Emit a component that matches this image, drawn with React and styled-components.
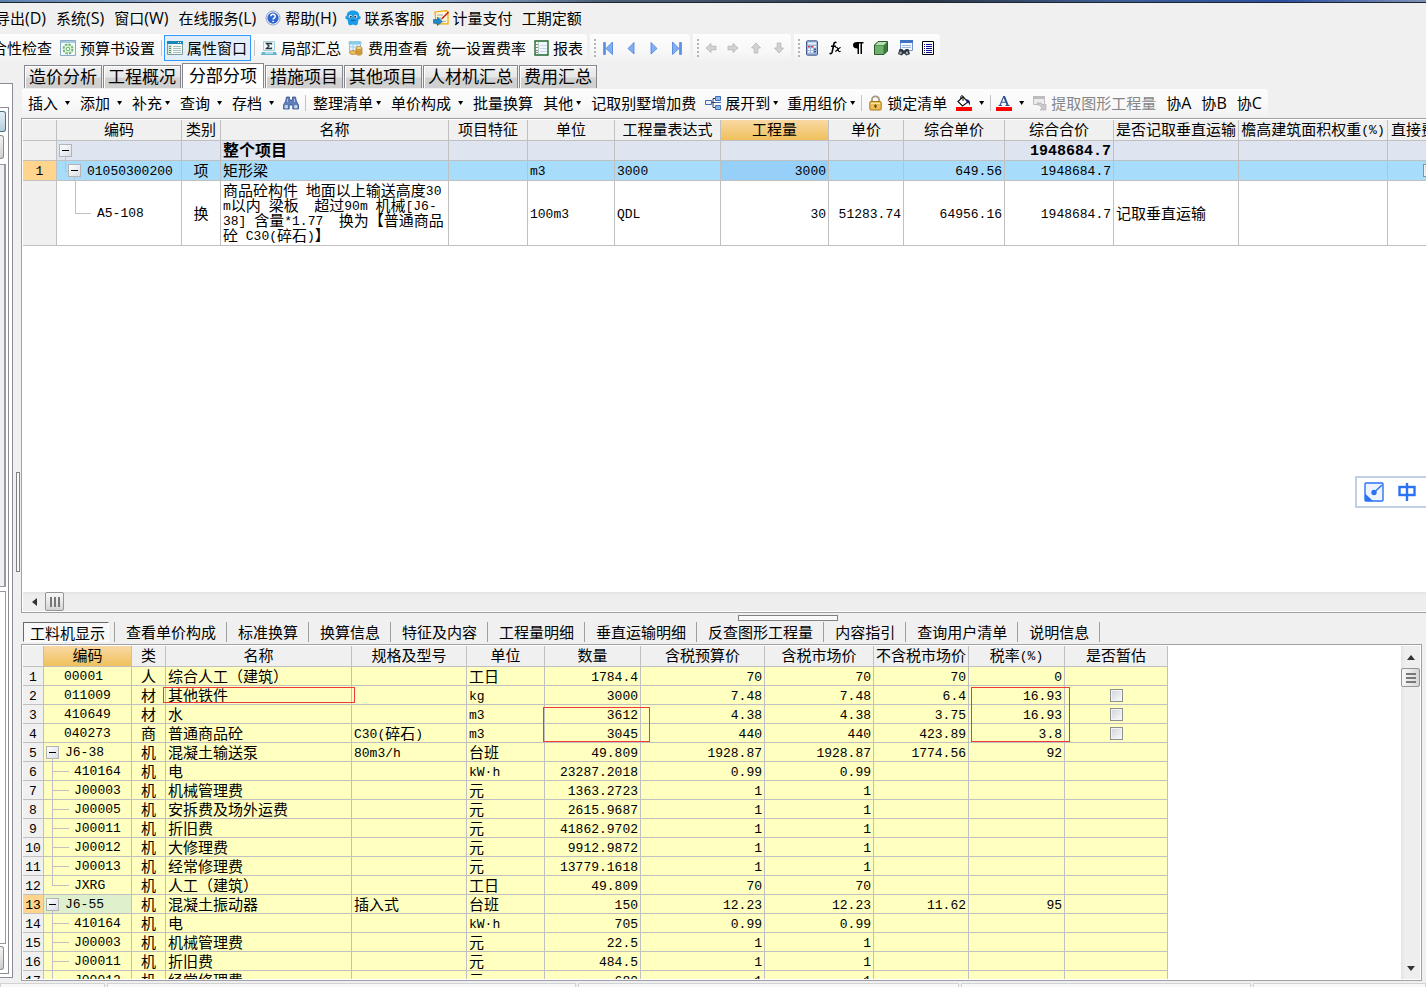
import React from "react";
import styled, { createGlobalStyle, css } from "styled-components";

const UI_FONT = `"Noto Sans CJK SC", sans-serif`;
const LINE = "#c0c0c0";
const FRAME = "#a0a0a6";

const Global = createGlobalStyle`
  *, *::before, *::after { box-sizing: border-box; }
  body { margin: 0; background: #f0f0f0; color: #000; font: 15px/20px ${UI_FONT}; overflow: hidden; }
  button { font: inherit; color: inherit; background: none; border: 0; margin: 0; padding: 0; white-space: nowrap; }
  svg { display: block; flex: none; }
`;

const Screen = styled.div`
  display: flex;
  flex-direction: column;
  height: 100vh;
  overflow: hidden;
`;

const TitleEdge = styled.div`
  flex: none;
  height: 3px;
  border-bottom: 1px solid #1c2733;
  background: linear-gradient(90deg, #5a7fae, #8fa9c9 12%, #9fc0e6 28%, #4d6079 42%, #2b3645 65%, #3d5e93 78%, #2c4fa0 90%, #7e92b5);
`;

/* ---------- text ---------- */

const Latin = styled.span`
  font-family: "Open Sans", sans-serif;
  font-size: 16px;
`;

const Mono = styled.span`
  font-family: "Liberation Mono", monospace;
  font-size: ${(p) => (p.$strong ? 15 : 13)}px;
  line-height: 0;
  vertical-align: 1px;
  white-space: pre;
`;

const split = (text) => text.split(/([\x20-\x7e·]+)/).filter(Boolean);
const isAscii = (run) => /^[\x20-\x7e·]+$/.test(run);

const UiText = ({ children }) =>
  split(children).map((run, i) => (isAscii(run) ? <Latin key={i}>{run}</Latin> : run));

const GridText = ({ children, strong }) =>
  split(children).map((run, i) =>
    isAscii(run) ? <Mono key={i} $strong={strong}>{run}</Mono> : run
  );

/* ---------- menu and toolbars ---------- */

const MenuBar = styled.nav`
  display: flex;
  flex: none;
  align-items: center;
  height: 31px;
  padding-bottom: 2px;
  margin-left: -10px;
`;

const ToolRow = styled.div`
  display: flex;
  flex: none;
  gap: 3px;
  height: ${(p) => (p.$inner ? 29 : 28)}px;
  padding-left: ${(p) => (p.$inner ? 1 : 0)}px;
`;

const ToolBar = styled.div`
  display: flex;
  align-items: center;
  flex: none;
  height: 28px;
  padding: ${(p) => (p.$flush ? "0" : "0 1px")};
  margin-left: ${(p) => (p.$flush ? "-12px" : "0")};
  border-radius: 0 3px 3px 0;
  background: linear-gradient(#fdfdfd, #f8f8f8 60%, #f0f0f0);
`;

const ToolButton = styled.button`
  display: flex;
  align-items: center;
  gap: 4px;
  height: 26px;
  padding: 0 ${(p) => p.$pad || 5}px;
  color: ${(p) => (p.$muted ? "#868686" : "inherit")};
  ${(p) =>
    p.$pressed &&
    css`
      padding: 0 3px 0 2px;
      border: 1px solid #3399ff;
      background: #e3eefb;
    `}
`;

const Caret = styled.i`
  width: 5px;
  height: 4px;
  margin-left: ${(p) => (p.$wide ? 3 : -1)}px;
  background: #000;
  clip-path: polygon(0 0, 100% 0, 50% 100%);
`;

const Divider = styled.i`
  width: 1px;
  height: 16px;
  margin: 0 ${(p) => p.$space || 1}px;
  background: #c4c4c4;
`;

const Grip = styled.i`
  width: 2px;
  height: 19px;
  margin: 0 1px 0 3px;
  background: repeating-linear-gradient(#b4b4b4 0 2px, transparent 2px 4px);
`;

/* ---------- icons ---------- */

const Svg = ({ w = 16, children }) => (
  <svg width={w} height="16" viewBox={`0 0 ${w} 16`} aria-hidden="true">{children}</svg>
);

const HelpIcon = () => (
  <Svg>
    <circle cx="8" cy="8" r="7" fill="#fff" stroke="#8fa0c4" />
    <circle cx="8" cy="8" r="5.700" fill="#2f66d0" />
    <path d="M5.8 6.3a2.2 2.1 0 1 1 3.5 1.7c-.8.5-1.2.8-1.2 1.6M8.1 10.7v1.4" stroke="#fff" strokeWidth="1.6" fill="none" />
  </Svg>
);
const MascotIcon = () => (
  <Svg>
    <path d="M8 .5c4.200 0 6.300 2.300 6.300 5.500l1.500.8-.5 2.200-1.800.5-.6 3.200c-.3 2.200-1.200 2.900-2.800 2.500L8 14.500l-2.100.7c-1.600.4-2.500-.3-2.800-2.500l-.6-3.200-1.800-.5L.2 6.800 1.700 6C1.700 2.800 3.800.5 8 .5z" fill="#1b9ce8" />
    <circle cx="5.500" cy="6.500" r="1.800" fill="#d8e6ee" />
    <circle cx="10.500" cy="6.500" r="1.800" fill="#d8e6ee" />
    <circle cx="5.800" cy="6.700" r="1" fill="#234" />
    <circle cx="10.200" cy="6.700" r="1" fill="#234" />
    <path d="M6 10.500h4" stroke="#0a5f9e" />
  </Svg>
);
const PayIcon = () => (
  <Svg>
    <path d="M2 2l11-1.300 2 1.200v12H3z" fill="#fff6dc" stroke="#f0a800" strokeWidth="1.200" />
    <path d="M4 5h6M4 8h4M9 12l4-1" stroke="#9aa" />
    <path d="M15 1.500L9 7.500 7.500 10 10 8.800l6-6z" fill="#c8281e" />
    <path d="M.5 9.500h4V7.300L9.300 11.500 4.500 15.500v-2.200h-4z" fill="#1e88d0" stroke="#0b5a97" strokeWidth=".6" />
  </Svg>
);
const SettingsIcon = () => (
  <Svg>
    <path d="M.5.5h15v15H.5z" fill="#f4f9fb" stroke="#86aac4" />
    <path d="M1 1h14v2H1z" fill="#a9c9e2" />
    <circle cx="8" cy="9" r="4.500" fill="#e7f6e6" stroke="#74b874" strokeWidth="2" strokeDasharray="2.500 1" />
    <circle cx="8" cy="9" r="1.800" fill="#fff" stroke="#5fae62" />
  </Svg>
);
const PropertyIcon = () => (
  <Svg>
    <path d="M.5 1.500h15v13H.5z" fill="#f5fafa" stroke="#7d9a98" />
    <path d="M0 1h16v3H0z" fill="#1587b8" />
    <path d="M11 2h1v1h-1zM13 2h1v1h-1z" fill="#fff" />
    <path d="M1 4.500h4V14H1z" fill="#d4e8dc" />
    <path d="M2 6.500h2M2 8.500h2M2 10.500h2M2 12.500h2" stroke="#65956f" />
    <path d="M6 6.500h8M6 8.500h8M6 10.500h8M6 12.500h8" stroke="#a9bcbc" />
  </Svg>
);
const SumIcon = () => (
  <Svg>
    <path d="M2.500 1.500h11v9h-11z" fill="#eef8fb" stroke="#a7cfdc" />
    <path d="M10.500 4.500V3.500h-5L8 6 5.500 8.500h5v-1" stroke="#26353d" strokeWidth="1.300" fill="none" />
    <path d="M1 12h14l1 3H0z" fill="#63b6d0" />
    <path d="M4 13h8" stroke="#fff" />
  </Svg>
);
const FeeIcon = () => (
  <Svg>
    <path d="M1.500 1.500h11v10h-11z" fill="#e3f4fd" stroke="#86c3e0" />
    <path d="M1 2h12v2H1zM5 2v9M9 2v9M1 7h12" stroke="#9bd0ea" fill="#74bfe6" />
    <ellipse cx="5" cy="12.500" rx="3.500" ry="2" fill="#edbf5c" stroke="#b27c22" strokeWidth=".7" />
    <path d="M8 8v5.500c0 2.200 6 2.200 6 0V8z" fill="#e2aa45" stroke="#b27c22" strokeWidth=".7" />
    <ellipse cx="11" cy="8" rx="3" ry="1.500" fill="#f8d98c" stroke="#b27c22" strokeWidth=".7" />
    <path d="M8 10.500c1 1.300 5 1.300 6 0M8 12.500c1 1.300 5 1.300 6 0" stroke="#b27c22" strokeWidth=".7" fill="none" />
  </Svg>
);
const ReportIcon = () => (
  <Svg w={15}>
    <path d="M1 1h13v14H1z" fill="#f1f6ff" stroke="#1d6a2c" strokeWidth="1.400" />
    <path d="M4.500 2v12" stroke="#b9c9bd" />
    <path d="M2 4.500h2M2 7.500h2M2 10.500h2M2 12.500h2" stroke="#888" />
    <path d="M6 5.500h7M6 8.500h7M6 11.500h7" stroke="#c9d7ea" />
  </Svg>
);
const PlayIcon = ({ flip, bar }) => (
  <Svg>
    <g transform={flip ? "translate(16 0) scale(-1 1)" : undefined}>
      <path d={bar ? "M3.500 2L10 8.500 3.500 14.500z" : "M5 2.500L11 8.500 5 14z"} fill="#7fb0f6" stroke="#4a7dd6" strokeWidth=".8" />
      {bar && <path d="M10.500 2.500h2v12h-2z" fill="#5d91e6" stroke="#4a7dd6" strokeWidth=".6" />}
    </g>
  </Svg>
);
const ArrowIcon = ({ turn }) => (
  <Svg>
    <path d="M3 8l5-4.500V6.200h5v3.600H8v2.700z" fill="#d3d3d3" stroke="#b3b3b3" strokeWidth=".8" transform={`rotate(${turn} 8 8)`} />
  </Svg>
);
const CalcIcon = () => (
  <Svg>
    <rect x="2.500" y=".8" width="11" height="14.400" rx="1" fill="#9db7de" stroke="#41598c" />
    <path d="M4 2.500h8v2H4z" fill="#e9f2ff" />
    <path d="M4 6.800h8M4 9.300h8M4 11.800h8" stroke="#fff" strokeWidth="1.500" strokeDasharray="2 1" />
    <path d="M4 6.800h2M7 6.800h2" stroke="#d34" strokeWidth="1.500" />
    <path d="M10 11.800h2M10 9.300h2" stroke="#2c4d90" strokeWidth="1.500" />
  </Svg>
);
const FxIcon = () => (
  <Svg>
    <path d="M9.500 2.600C7.800 1.500 7 3 6.600 5L5.300 11.500C5 13.500 4 14 2.600 13.300M4 6.300h5" stroke="#000" strokeWidth="1.600" fill="none" />
    <path d="M8.500 7.500c1.500-.8 2 .3 2.500 2s1 2.700 2.600 1.800M13.700 7.500c-1.500-.3-4 4-5.500 4" stroke="#000" strokeWidth="1.200" fill="none" />
  </Svg>
);
const PilcrowIcon = () => (
  <Svg>
    <path d="M7 2h6.500v1.500H12V14h-1.500V3.500H9V14H7.500V8.500C4.500 8.500 3 7.200 3 5.200S4.500 2 7 2z" fill="#000" />
  </Svg>
);
const CubeIcon = () => (
  <Svg>
    <path d="M1.500 5L5 1.500h9.500V11L11 14.500H1.500z" fill="#3b7a3d" stroke="#285c2b" />
    <path d="M2 5.500h8.500V14H2z" fill="#6fb06c" />
    <path d="M2.500 5L5.200 2h8.600L11 5z" fill="#b6dfb2" />
  </Svg>
);
const FindSheetIcon = () => (
  <Svg>
    <path d="M3.500.5h12v10h-12z" fill="#f4f8ff" stroke="#7295cc" />
    <path d="M3 0h13v3H3z" fill="#3f74c4" />
    <path d="M5 5.500h9M5 7.500h9" stroke="#9db6dc" />
    <path d="M2.500 9h3l.5 1.500h2L8.500 9h3l1.500 5-3.500 1.500L7 13.500 4.500 15.500 1 14z" fill="#30363d" />
    <circle cx="3.600" cy="12.900" r="1.300" fill="#9aa5b0" />
    <circle cx="10" cy="12.900" r="1.300" fill="#9aa5b0" />
  </Svg>
);
const ListIcon = () => (
  <Svg>
    <path d="M2.500 1.500h11v13h-11z" fill="#fff" stroke="#000" />
    <path d="M4 4.500h1M4 6.500h1M4 8.500h1M4 10.500h1M4 12.500h1M6 4.500h6M6 6.500h6M6 8.500h6M6 10.500h6M6 12.500h6" stroke="#10108c" />
  </Svg>
);
const BinocularsIcon = () => (
  <Svg>
    <path d="M3.500 2h3v3h3V2h3l.8 4L15.500 10v4H9.800v-4H6.200v4H.5v-4L2.700 6z" fill="#5f80bb" stroke="#34528c" strokeWidth=".8" />
    <path d="M2 10.500h2.500v2.500H2zM11.500 10.500H14v2.500h-2.500zM4.500 4v3M11.500 4v3" fill="#c3d3f0" stroke="#c3d3f0" strokeWidth=".8" />
  </Svg>
);
const ExpandIcon = () => (
  <Svg>
    <path d="M6 7.500h4M8 3.500v9M8 3.500h3M8 12.500h3" stroke="#2b3d66" fill="none" />
    <path d="M.5 5.500h6v4h-6z" fill="#e6f0ff" stroke="#3f6bb5" />
    <path d="M10.500 1.500h5v4h-5zM10.500 10.500h5v4h-5z" fill="#8db4ee" stroke="#3f6bb5" />
    <path d="M10 7.500h6" stroke="#3f6bb5" />
  </Svg>
);
const LockIcon = () => (
  <Svg w={15}>
    <path d="M4 8V4.500a3.500 3.200 0 0 1 7 0V8" fill="none" stroke="#a79a80" strokeWidth="1.800" />
    <rect x="1.800" y="6.500" width="11.400" height="8.500" rx="1" fill="#edbe55" stroke="#a87820" />
    <path d="M3 8.500h9" stroke="#fae3a4" />
    <path d="M7.500 9.500v3.500M6.200 10.800h2.600" stroke="#63430c" strokeWidth="1.300" />
  </Svg>
);
const FillIcon = () => (
  <Svg>
    <path d="M2 6.500L7 1.800 12 7 6.500 11z" fill="#fff" stroke="#111" strokeWidth="1.200" />
    <path d="M7 6V1.500C7 .3 4.800.3 4.800 1.800V4" stroke="#111" fill="none" />
    <path d="M10 4.500c3 0 4.500 1.500 4 6-1-2-1.500-3-3-3z" fill="#10107c" />
    <path d="M0 12h16v4H0z" fill="#f00" />
  </Svg>
);
const FontColorIcon = () => (
  <Svg>
    <path d="M7.300 1h1.700l3.600 9h1v1H9.500v-1h1L9.700 7.800H5.600L4.800 10h1.200v1H2.500v-1h1zM7.600 3L6 6.800h3.300z" fill="#2d4f93" />
    <path d="M0 12h16v4H0z" fill="#f00" />
  </Svg>
);
const ExtractIcon = () => (
  <Svg w={15}>
    <path d="M1.500 1.500h11v8h-11z" fill="#ececec" stroke="#bdbdbd" />
    <path d="M1 1h12v3H1z" fill="#bdbdbd" />
    <path d="M5 8h4l3 3 2-2v6H8l2-2-3-3H5z" fill="#c9c9c9" stroke="#adadad" strokeWidth=".6" />
  </Svg>
);
const PenIcon = () => (
  <svg width="20" height="20" viewBox="0 0 20 20" aria-hidden="true">
    <rect x="1" y="1" width="18" height="18" rx="1" fill="#eef4ff" stroke="#2b73f6" strokeWidth="1.400" />
    <path d="M1 11.500L9 19H1z" fill="#2b73f6" />
    <circle cx="10" cy="10.500" r="2.700" fill="#2b73f6" />
    <path d="M10 10.500L18 3" stroke="#2b73f6" strokeWidth="1.500" />
  </svg>
);
const ZhongIcon = () => (
  <svg width="18" height="20" viewBox="0 0 18 20" aria-hidden="true">
    <rect x="1.500" y="5" width="15" height="8" fill="none" stroke="#2b73f6" strokeWidth="2.400" />
    <path d="M9 1v18" stroke="#2b73f6" strokeWidth="2.400" />
  </svg>
);

/* ---------- body frame ---------- */

const Body = styled.div`
  display: flex;
  flex: 1;
  min-height: 0;
`;

const SideDock = styled.aside`
  flex: none;
  display: flex;
  width: 13px;
  margin: 21px 0 3px;
  padding: 23px 3px 3px 0;
  border: solid #8c8c96;
  border-width: 1px 1px 1px 0;
  background: #fff;
`;

const SideInner = styled.div`
  flex: 1;
  display: flex;
  flex-direction: column;
  align-items: flex-start;
  padding-top: 3px;
  border: solid #8c8c96;
  border-width: 1px 1px 1px 0;
`;

const SideButton = styled.button`
  flex: none;
  width: ${(p) => (p.$blue ? 6 : 4)}px;
  height: ${(p) => (p.$blue ? 21 : 24)}px;
  margin-bottom: 3px;
  border: solid ${(p) => (p.$blue ? "#4d7184" : "#8a8a8a")};
  border-width: 1px 1px 1px 0;
  border-radius: 0 3px 3px 0;
  background: ${(p) => (p.$blue ? "linear-gradient(#e4f1f8, #b4cedb)" : "linear-gradient(#f4f4f4, #cfcfcf)")};
`;

const SideList = styled.div`
  flex: ${(p) => p.$grow};
  width: 6px;
  margin: 2px 0;
  border: solid #9a9a9e;
  border-width: 1px ${(p) => (p.$thick ? 2 : 1)}px 1px 0;
  background: ${(p) => (p.$thick ? "#eef0f6" : "#fff")};
`;

const VSplit = styled.div`
  flex: none;
  display: flex;
  align-items: center;
  justify-content: flex-end;
  width: 8px;
  padding: 0 1px 0 0;
`;

const Handle = styled.i`
  flex: none;
  width: ${(p) => (p.$across ? 100 : 4)}px;
  height: ${(p) => (p.$across ? 6 : 100)}px;
  border: 1px solid #808080;
  background: #fafafa;
`;

const Main = styled.main`
  flex: 1;
  min-width: 0;
  display: flex;
  flex-direction: column;
`;

const TabStrip = styled.div`
  display: flex;
  flex: none;
  align-items: flex-end;
  gap: 1px;
  height: 27px;
  padding: 0 0 1px 3px;
`;

const Tab = styled.button`
  height: ${(p) => (p.$active ? 25 : 23)}px;
  padding: 0 ${(p) => (p.$active ? 6 : 4)}px 2px;
  border: solid #86868e;
  border-width: 1px 1px 0;
  background: ${(p) => (p.$active ? "#fff" : "linear-gradient(#f2f2f2, #e6e6e6 50%, #d2d2d2 55%, #cfcfcf)")};
  box-shadow: ${(p) => (p.$active ? "none" : "inset 1px 1px #fff")};
  font-size: 17px;
  line-height: 20px;
`;

/* ---------- grids ---------- */

const Pane = styled.section`
  display: flex;
  flex-direction: column;
  position: relative;
  border: 1px solid ${FRAME};
  padding: 1px;
  background: #fff;
  ${(p) =>
    p.$lower
      ? css`flex: none; flex-direction: row; height: 337px; margin-right: 4px;`
      : css`flex: 1; min-height: 0; border-right: 0; padding-right: 0;`}
`;

const GridView = styled.div`
  flex: 1;
  min-width: 0;
  min-height: 0;
  overflow: hidden;
`;

const Table = styled.table`
  width: ${(p) => p.$width}px;
  table-layout: fixed;
  border-collapse: separate;
  border-spacing: 0;
  line-height: 15px;
`;

const Th = styled.th`
  height: 21px;
  padding: 0 0 3px;
  border: solid ${LINE};
  border-width: 0 1px 1px 0;
  background: ${(p) => (p.$active ? "linear-gradient(#f9d9a4, #f0c05c)" : "#f0f0f0")};
  font-weight: 400;
  text-align: ${(p) => (p.$left ? "left" : "center")};
  white-space: nowrap;
  ${(p) => p.$left && css`padding-left: 3px;`}
`;

const RowHead = styled.th`
  padding: 0 0 2px;
  border: solid ${LINE};
  border-width: 0 1px 1px 0;
  background: ${(p) => (p.$active ? "#ffd48c" : "#f0f0f0")};
  font-weight: 400;
  text-align: center;
`;

const tones = { plain: "#fff", total: "#dee5f0", picked: "#a8dcfb", focus: "#96d0f8", yellow: "#ffffc0", green: "#dff0cc" };

const Td = styled.td`
  height: ${(p) => p.$height}px;
  padding: 0 2px ${(p) => (p.$control ? 0 : 2)}px;
  border: solid ${LINE};
  border-width: 0 1px 1px 0;
  background: ${(p) => tones[p.$tone]};
  text-align: ${(p) => p.$align || "left"};
  white-space: nowrap;
  ${(p) => p.$tree && css`padding: 0;`}
  ${(p) => p.$strong && css`font-weight: 700; font-size: 16px;`}
`;

const TreeCell = styled.div`
  display: flex;
  align-items: center;
  height: ${(p) => p.$height}px;
  padding-left: ${(p) => p.$indent}px;
  ${Mono} { padding-top: 2px; line-height: 16px; }
`;

const Branch = styled.i`
  position: relative;
  align-self: stretch;
  width: ${(p) => p.$width}px;
  margin-right: ${(p) => p.$gap}px;
  &::before, &::after { content: ""; position: absolute; left: 0; top: 0; }
  &::before { height: ${(p) => (p.$last ? "50%" : "100%")}; border-left: 1px solid ${LINE}; }
  &::after { top: 50%; width: 100%; border-top: 1px solid ${LINE}; }
`;

const ToggleBox = styled.button`
  position: relative;
  flex: none;
  width: 13px;
  height: 13px;
  margin-right: 6px;
  border: 1px solid #b4b4b4;
  background: linear-gradient(135deg, #fff, #d8dce4);
  &::before { content: ""; position: absolute; left: 2px; top: 5px; width: 7px; height: 1px; background: #000; }
  &::after { content: ""; position: absolute; left: 5px; top: 12px; height: 3px; border-left: 1px solid ${LINE}; }
`;

const Check = styled.input`
  appearance: none;
  display: block;
  width: 13px;
  height: 13px;
  margin: 0 auto;
  border: 1px solid #8e8f8f;
  background: linear-gradient(135deg, #cfd3da, #fbfbfb);
  box-shadow: inset 0 0 0 1px #f4f4f4;
`;

const Marker = styled.i`
  position: absolute;
  left: ${(p) => p.$x}px;
  top: ${(p) => p.$y}px;
  width: ${(p) => p.$w}px;
  height: ${(p) => p.$h}px;
  border: 1px solid #f03a3a;
  pointer-events: none;
`;

/* ---------- scroll bars ---------- */

const ScrollTrack = styled.div`
  flex: none;
  display: flex;
  align-items: center;
  background: linear-gradient(${(p) => (p.$vertical ? "90deg" : "180deg")}, #e3e3e3, #eeeeee 20%, #eeeeee);
  ${(p) =>
    p.$vertical
      ? css`flex-direction: column; width: 19px;`
      : css`height: 19px;`}
`;

const ScrollArrow = styled.button`
  width: ${(p) => (p.$dir === "left" ? 22 : 19)}px;
  height: ${(p) => (p.$dir === "left" ? 19 : 22)}px;
  display: flex;
  align-items: center;
  justify-content: center;
  &::before {
    content: "";
    border: 4px solid transparent;
    ${(p) => p.$dir === "left" && css`border-right: 5px solid #333; border-left: 0;`}
    ${(p) => p.$dir === "up" && css`border-bottom: 5px solid #333; border-top: 0;`}
    ${(p) => p.$dir === "down" && css`border-top: 5px solid #333; border-bottom: 0;`}
  }
  ${(p) => p.$dir === "down" && css`margin-top: auto;`}
`;

const Thumb = styled.div`
  display: flex;
  align-items: center;
  justify-content: center;
  width: 19px;
  height: 19px;
  border: 1px solid #959595;
  border-radius: 2px;
  background: linear-gradient(${(p) => (p.$vertical ? "90deg" : "180deg")}, #f6f6f6, #e9e9e9 50%, #d4d4d4);
  &::before {
    content: "";
    width: 10px;
    height: 10px;
    background: repeating-linear-gradient(${(p) => (p.$vertical ? "180deg" : "90deg")}, #777 0 2px, transparent 2px 4px);
  }
`;

const SplitGap = styled.div`
  flex: none;
  height: 9px;
  padding: 2px 0 0 51%;
  display: flex;
`;

const SubTabs = styled.div`
  display: flex;
  flex: none;
  height: 22px;
  padding-left: 2px;
`;

const SubTab = styled.button`
  height: 20px;
  padding: 0 10px 0 11px;
  border-right: 1px solid #a0a0a0;
  line-height: 20px;
  ${(p) =>
    p.$active &&
    css`
      margin-right: 5px;
      padding: 0 3px 0 6px;
      border: 1px solid;
      border-color: #696969 #fff #fff #696969;
      line-height: 17px;
      background: #f8f8f8;
    `}
`;

const SubTabEdge = styled.i`
  width: 1px;
  height: 20px;
  background: #a0a0a0;
`;

const StatusBar = styled.footer`
  display: flex;
  gap: 2px;
  flex: none;
  height: 6px;
  padding-top: 2px;
`;

const StatusCell = styled.div`
  flex: ${(p) => p.$grow} 1 0;
  border: solid #d2d2d2;
  border-width: 1px 1px 0;
  background: #f8f8f8;
`;

const ImeBar = styled.div`
  position: fixed;
  right: 0;
  top: 476px;
  display: flex;
  align-items: center;
  gap: 14px;
  width: 71px;
  height: 32px;
  padding-left: 7px;
  border: solid #c3cfe8;
  border-width: 2px 0 2px 2px;
  background: #fff;
`;

/* ---------- data ---------- */

const menu = [
  ["导出(D)"], ["系统(S)"], ["窗口(W)"], ["在线服务(L)"],
  ["帮助(H)", HelpIcon, 4], ["联系客服", MascotIcon, 4], ["计量支付", PayIcon, 4], ["工期定额"],
];

const upperCols = [
  ["", 34], ["编码", 125], ["类别", 39], ["名称", 228], ["项目特征", 79], ["单位", 87], ["工程量表达式", 106],
  ["工程量", 108], ["单价", 75], ["综合单价", 101], ["综合合价", 109], ["是否记取垂直运输", 125], ["檐高建筑面积权重(%)", 149], ["直接费", 83],
];

const lowerCols = [
  ["", 21], ["编码", 88], ["类", 34], ["名称", 186], ["规格及型号", 115], ["单位", 78], ["数量", 96],
  ["含税预算价", 124], ["含税市场价", 109], ["不含税市场价", 95], ["税率(%)", 96], ["是否暂估", 103],
];

const lowerRows = [
  ["leaf", "00001", "人", "综合人工（建筑）", "", "工日", "1784.4", "70", "70", "70", "0"],
  ["leaf", "011009", "材", "其他铁件", "", "kg", "3000", "7.48", "7.48", "6.4", "16.93", true],
  ["leaf", "410649", "材", "水", "", "m3", "3612", "4.38", "4.38", "3.75", "16.93", true],
  ["leaf", "040273", "商", "普通商品砼", "C30(碎石)", "m3", "3045", "440", "440", "423.89", "3.8", true],
  ["open", "J6-38", "机", "混凝土输送泵", "80m3/h", "台班", "49.809", "1928.87", "1928.87", "1774.56", "92"],
  ["child", "410164", "机", "电", "", "kW·h", "23287.2018", "0.99", "0.99", "", ""],
  ["child", "J00003", "机", "机械管理费", "", "元", "1363.2723", "1", "1", "", ""],
  ["child", "J00005", "机", "安拆费及场外运费", "", "元", "2615.9687", "1", "1", "", ""],
  ["child", "J00011", "机", "折旧费", "", "元", "41862.9702", "1", "1", "", ""],
  ["child", "J00012", "机", "大修理费", "", "元", "9912.9872", "1", "1", "", ""],
  ["child", "J00013", "机", "经常修理费", "", "元", "13779.1618", "1", "1", "", ""],
  ["last", "JXRG", "机", "人工（建筑）", "", "工日", "49.809", "70", "70", "", ""],
  ["open", "J6-55", "机", "混凝土振动器", "插入式", "台班", "150", "12.23", "12.23", "11.62", "95"],
  ["child", "410164", "机", "电", "", "kW·h", "705", "0.99", "0.99", "", ""],
  ["child", "J00003", "机", "机械管理费", "", "元", "22.5", "1", "1", "", ""],
  ["child", "J00011", "机", "折旧费", "", "元", "484.5", "1", "1", "", ""],
  ["child", "J00012", "机", "经常修理费", "", "元", "680", "1", "1", "", ""],
];

const lowerTabs = ["工料机显示", "查看单价构成", "标准换算", "换算信息", "特征及内容", "工程量明细", "垂直运输明细", "反查图形工程量", "内容指引", "查询用户清单", "说明信息"];
const markers = [
  { $x: 141, $y: 42, $w: 192, $h: 16 },
  { $x: 521, $y: 62, $w: 107, $h: 35 },
  { $x: 949, $y: 42, $w: 99, $h: 55 },
];
const numeric = (i) => (i >= 6 && i <= 10 ? "right" : i === 2 ? "center" : "left");

/* ---------- pieces ---------- */

const Tool = ({ icon: Icon, label, name, caret, ...rest }) => (
  <ToolButton type="button" aria-label={name} {...rest}>
    {Icon && <Icon />}
    {label && <span><UiText>{label}</UiText></span>}
    {caret && <Caret $wide={caret === "wide"} />}
  </ToolButton>
);

const Head = ({ cols, active, leftLast }) => (
  <>
    <colgroup>{cols.map(([, w], i) => <col key={i} style={{ width: w }} />)}</colgroup>
    <thead>
      <tr>
        {cols.map(([label], i) => (
          <Th key={i} scope="col" $active={label === active} $left={leftLast && i === cols.length - 1}>
            <GridText>{label}</GridText>
          </Th>
        ))}
      </tr>
    </thead>
  </>
);

const sum = (cols) => cols.reduce((n, c) => n + c[1], 0);

const UpperCells = ({ cells, tone, height, strong, from = 2 }) =>
  cells.map((cell, i) => {
    const col = i + from;
    const align = col === 2 ? "center" : col >= 7 && col <= 10 ? "right" : "left";
    return (
      <Td
        key={col}
        $height={height}
        $tone={tone === "picked" && col === 7 ? "focus" : tone}
        $align={align}
        $strong={strong}
        $control={tone === "picked" && col === 13}
      >
        {typeof cell === "string" ? <GridText strong={strong}>{cell}</GridText> : cell}
      </Td>
    );
  });

const UpperTable = () => (
  <Table $width={sum(upperCols)}>
    <Head cols={upperCols} active="工程量" leftLast />
    <tbody>
      <tr>
        <RowHead scope="row" />
        <Td $tree $height={20} $tone="total">
          <TreeCell $height={19} $indent={2}><ToggleBox type="button" aria-label="折叠整个项目" /></TreeCell>
        </Td>
        <UpperCells tone="total" height={20} strong cells={["", "整个项目", "", "", "", "", "", "", "1948684.7", "", "", ""]} />
      </tr>
      <tr>
        <RowHead scope="row" $active><Mono>1</Mono></RowHead>
        <Td $tree $height={20} $tone="picked">
          <TreeCell $height={19} $indent={8}>
            <Branch $last $width={3} $gap={0} />
            <ToggleBox type="button" aria-label="折叠矩形梁" />
            <Mono>01050300200</Mono>
          </TreeCell>
        </Td>
        <UpperCells
          tone="picked"
          height={20}
          cells={["项", "矩形梁", "", "m3", "3000", "3000", "", "649.56", "1948684.7", "", "", <Check key="c" type="checkbox" aria-label="直接费" />]}
        />
      </tr>
      <tr>
        <RowHead scope="row" />
        <Td $tree $height={65} $tone="plain">
          <TreeCell $height={64} $indent={18}>
            <Branch $last $width={16} $gap={6} />
            <Mono>A5-108</Mono>
          </TreeCell>
        </Td>
        <UpperCells
          tone="plain"
          height={65}
          cells={[
            "换",
            <React.Fragment key="n">
              <GridText>商品砼构件 地面以上输送高度30</GridText><br />
              <GridText>{"m以内 梁板  超过90m 机械[J6-"}</GridText><br />
              <GridText>{"38] 含量*1.77  换为【普通商品"}</GridText><br />
              <GridText>砼 C30(碎石)】</GridText>
            </React.Fragment>,
            "", "100m3", "QDL", "30", "51283.74", "64956.16", "1948684.7", "记取垂直运输", "", "",
          ]}
        />
      </tr>
    </tbody>
  </Table>
);

const LowerTable = () => (
  <Table $width={sum(lowerCols)}>
    <Head cols={lowerCols} active="编码" />
    <tbody>
      {lowerRows.map(([kind, code, ...rest], r) => (
        <tr key={r}>
          <RowHead scope="row" $active={r === 12}><Mono>{r + 1}</Mono></RowHead>
          <Td $tree $height={19} $tone={r === 12 ? "green" : "yellow"}>
            <TreeCell $height={18} $indent={kind === "leaf" ? 20 : kind === "open" ? 2 : 8}>
              {kind === "open" && <ToggleBox type="button" aria-label={`折叠${code}`} />}
              {(kind === "child" || kind === "last") && <Branch $last={kind === "last"} $width={17} $gap={5} />}
              <Mono>{code}</Mono>
            </TreeCell>
          </Td>
          {rest.slice(0, 9).map((cell, i) => (
            <Td key={i} $height={19} $tone="yellow" $align={numeric(i + 2)}><GridText>{cell}</GridText></Td>
          ))}
          <Td $height={19} $tone="yellow" $control>
            {rest[9] && <Check type="checkbox" aria-label={`是否暂估 ${code}`} />}
          </Td>
        </tr>
      ))}
    </tbody>
  </Table>
);

export default function App() {
  return (
    <Screen>
      <Global />
      <TitleEdge />
      <MenuBar>
        {menu.map(([label, icon, pad]) => <Tool key={label} label={label} icon={icon} $pad={pad} />)}
      </MenuBar>
      <ToolRow>
        <ToolBar $flush>
          <Tool $pad={4} label="合性检查" />
          <Tool $pad={4} icon={SettingsIcon} label="预算书设置" />
          <Divider $space={2} />
          <Tool $pressed icon={PropertyIcon} label="属性窗口" />
          <Divider $space={3} />
          <Tool $pad={3} icon={SumIcon} label="局部汇总" />
          <Tool $pad={4} icon={FeeIcon} label="费用查看" />
          <Tool $pad={4} label="统一设置费率" />
          <Tool $pad={4} icon={ReportIcon} label="报表" />
        </ToolBar>
        <ToolBar>
          <Grip />
          <Tool $pad={3} icon={() => <PlayIcon flip bar />} name="首行" />
          <Tool $pad={4} icon={() => <PlayIcon flip />} name="上一行" />
          <Tool $pad={3} icon={() => <PlayIcon />} name="下一行" />
          <Tool $pad={4} icon={() => <PlayIcon bar />} name="末行" />
        </ToolBar>
        <ToolBar>
          <Grip />
          <Tool $pad={3} icon={() => <ArrowIcon turn={0} />} name="左移" />
          <Tool $pad={3} icon={() => <ArrowIcon turn={180} />} name="右移" />
          <Tool $pad={4} icon={() => <ArrowIcon turn={90} />} name="上移" />
          <Tool $pad={3} icon={() => <ArrowIcon turn={270} />} name="下移" />
        </ToolBar>
        <ToolBar>
          <Grip />
          <Tool $pad={3} icon={CalcIcon} name="计算器" />
          <Tool $pad={4} icon={FxIcon} name="函数" />
          <Tool $pad={3} icon={PilcrowIcon} name="段落" />
          <Tool $pad={4} icon={CubeIcon} name="图形" />
          <Tool $pad={4} icon={FindSheetIcon} name="查找" />
          <Tool $pad={3} icon={ListIcon} name="列表" />
        </ToolBar>
      </ToolRow>
      <Body>
        <SideDock>
          <SideInner>
            <SideButton type="button" $blue aria-label="导航" />
            <SideButton type="button" aria-label="展开" />
            <SideList $thick $grow={42} />
            <SideList $grow={35} />
            <SideButton type="button" aria-label="更多" />
          </SideInner>
        </SideDock>
        <VSplit><Handle /></VSplit>
        <Main>
          <TabStrip>
            {["造价分析", "工程概况", "分部分项", "措施项目", "其他项目", "人材机汇总", "费用汇总"].map((t) => (
              <Tab key={t} type="button" $active={t === "分部分项"}>{t}</Tab>
            ))}
          </TabStrip>
          <ToolRow $inner>
            <ToolBar>
              <Tool label="插入" caret="wide" />
              <Tool label="添加" caret="wide" />
              <Tool label="补充" caret="near" />
              <Tool label="查询" caret="wide" />
              <Tool label="存档" caret="wide" />
              <Tool $pad={4} icon={BinocularsIcon} name="查找" />
              <Divider $space={2} />
              <Tool label="整理清单" caret="near" />
              <Tool label="单价构成" caret="wide" />
              <Tool label="批量换算" />
              <Tool label="其他" caret="near" />
              <Tool label="记取别墅增加费" />
              <Tool $pad={4} icon={ExpandIcon} label="展开到" caret="near" />
              <Tool label="重用组价" caret="near" />
              <Divider />
              <Tool icon={LockIcon} label="锁定清单" />
              <Tool $pad={4} icon={FillIcon} caret="wide" name="填充颜色" />
              <Divider $space={2} />
              <Tool $pad={3} icon={FontColorIcon} caret="wide" name="字体颜色" />
              <Tool $muted icon={ExtractIcon} label="提取图形工程量" />
              <Tool label="协A" />
              <Tool label="协B" />
              <Tool label="协C" />
            </ToolBar>
          </ToolRow>
          <Pane>
            <GridView><UpperTable /></GridView>
            <ScrollTrack>
              <ScrollArrow type="button" $dir="left" aria-label="向左滚动" />
              <Thumb />
            </ScrollTrack>
          </Pane>
          <SplitGap><Handle $across /></SplitGap>
          <SubTabs>
            {lowerTabs.map((t, i) => (
              <React.Fragment key={t}>
                <SubTab type="button" $active={i === 0}>{t}</SubTab>
                {i === 0 && <SubTabEdge />}
              </React.Fragment>
            ))}
          </SubTabs>
          <Pane $lower>
            <GridView><LowerTable /></GridView>
            <ScrollTrack $vertical>
              <ScrollArrow type="button" $dir="up" aria-label="向上滚动" />
              <Thumb $vertical />
              <ScrollArrow type="button" $dir="down" aria-label="向下滚动" />
            </ScrollTrack>
            {markers.map((m, i) => <Marker key={i} {...m} />)}
          </Pane>
        </Main>
      </Body>
      <StatusBar>
        {[104, 471, 382, 291, 172].map((g) => <StatusCell key={g} $grow={g} />)}
      </StatusBar>
      <ImeBar><PenIcon /><ZhongIcon /></ImeBar>
    </Screen>
  );
}
